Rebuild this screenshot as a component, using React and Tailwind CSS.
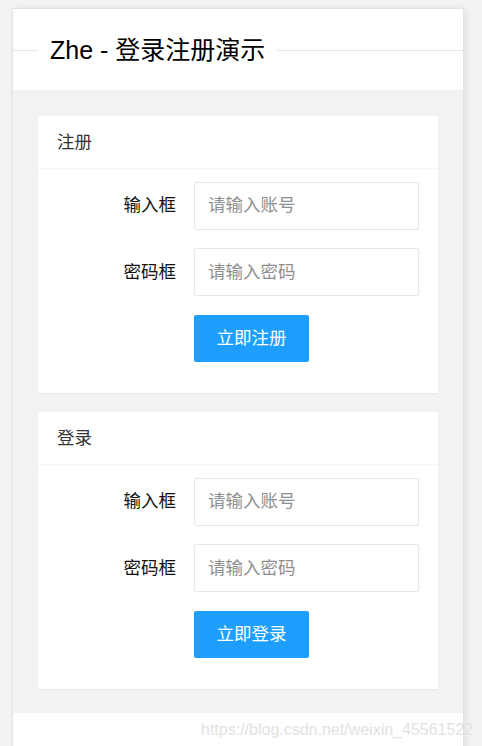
export default function App() {
  const font = { fontFamily: '"Liberation Sans", "Noto Sans CJK SC", sans-serif' }

  return (
    <div className="relative h-[746px] overflow-hidden bg-[#f3f3f3] pt-[8px] pl-[12px]" style={font}>
      <div className="w-[452px] h-[760px] border border-[#e2e2e2] bg-white shadow-[2px_0_6px_rgba(0,0,0,0.08)]">
        {/* Title */}
        <div className="h-[81px] pt-[26px]">
          <div className="flex h-[30px] items-center">
            <div className="h-px w-[25px] bg-[#e6e6e6]" />
            <h1 className="px-[12px] text-[25px] leading-[30px] text-black whitespace-nowrap">Zhe - 登录注册演示</h1>
            <div className="h-px flex-1 bg-[#e6e6e6]" />
          </div>
        </div>

        {/* Cards */}
        <div className="bg-[#f2f2f2] px-[25px] pt-[26px] pb-[24px] flex flex-col gap-[19px]">
          <Card title="注册" button="立即注册" />
          <Card title="登录" button="立即登录" />
        </div>
      </div>

      <div className="absolute left-[201px] top-[720px] text-[16px] leading-[20px] text-[#e2e2e2] whitespace-nowrap">
        https://blog.csdn.net/weixin_45561522
      </div>
    </div>
  )
}

function Card({ title, button }) {
  return (
    <div className="rounded-[2px] bg-white shadow-[0_1px_2px_rgba(0,0,0,0.05)]">
      <div className="h-[53px] border-b border-[#f6f6f6] px-[19px] text-[17.5px] leading-[52px] text-[#333]">
        {title}
      </div>
      <div className="px-[19px] py-[12.5px]">
        <Row label="输入框" placeholder="请输入账号" />
        <Row label="密码框" placeholder="请输入密码" />
        <div className="mb-[19px] pl-[137px]">
          <button className="h-[47px] rounded-[2px] bg-[#1e9fff] px-[22.5px] text-[17.5px] text-white">
            {button}
          </button>
        </div>
      </div>
    </div>
  )
}

function Row({ label, placeholder }) {
  return (
    <div className="mb-[18.5px] flex items-center">
      <label className="w-[137px] shrink-0 pr-[18px] text-right text-[17.5px] text-[#111]">{label}</label>
      <input
        type="text"
        placeholder={placeholder}
        className="h-[48px] min-w-0 flex-1 rounded-[2px] border border-[#e6e6e6] pl-[13px] text-[17.5px] text-[#333] outline-none placeholder:text-[#8f8f8f]"
      />
    </div>
  )
}
